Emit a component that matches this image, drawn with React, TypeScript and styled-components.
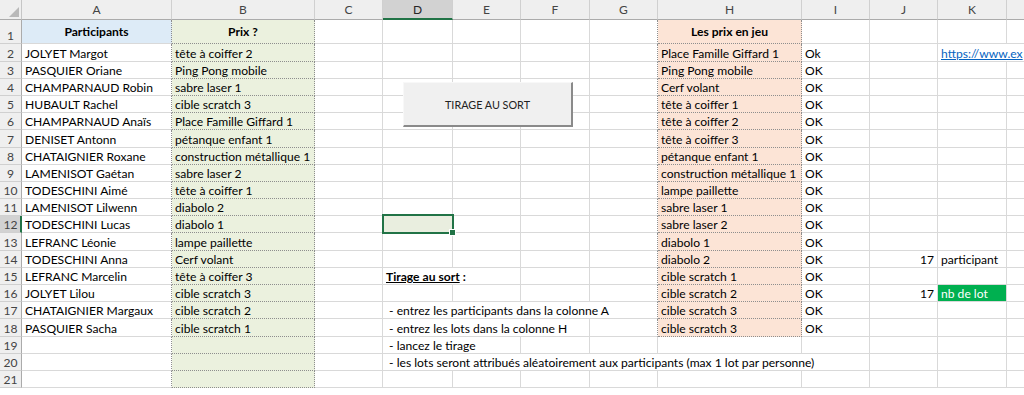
import React from "react";
import styled, { createGlobalStyle } from "styled-components";

const GRID = "#d9d9d9";
const DOT = "#8e8e8e";
const GREEN = "#217346";
const COLS = [22, 150, 143, 68, 70, 68, 69, 68, 144, 68, 68, 69, 90];
const LETTERS = ["A", "B", "C", "D", "E", "F", "G", "H", "I", "J", "K", ""];
const TOTAL = COLS.reduce((a, b) => a + b, 0);
const FONT = `Lato, "Open Sans", "Liberation Sans", sans-serif`;

const GlobalStyle = createGlobalStyle`
  html, body { margin: 0; padding: 0; background: #fff; overflow: hidden; }
  body { font-family: ${FONT}; }
`;

const Sheet = styled.div`
  position: relative;
  display: grid;
  grid-template-columns: ${COLS.map((c) => `${c}px`).join(" ")};
  grid-template-rows: 20px 24.4px repeat(21, 17.2px);
  width: ${TOTAL}px;
  font-family: ${FONT};
  font-size: 12.1px;
  color: #000;
`;

const Corner = styled.div`
  box-sizing: border-box;
  background: #efefef;
  border-right: 1px solid #c6c6c6;
  border-bottom: 1px solid #ababab;
  display: flex;
  align-items: flex-end;
  justify-content: flex-end;
  padding: 0 2px 2px 0;
`;

const ColHeader = styled.div<{ $sel?: boolean }>`
  box-sizing: border-box;
  background: ${(p) => (p.$sel ? "#d2d2d2" : "#efefef")};
  border-right: 1px solid #d0d0d0;
  border-bottom: ${(p) => (p.$sel ? `2px solid ${GREEN}` : "1px solid #ababab")};
  color: ${(p) => (p.$sel ? "#262626" : "#444")};
  display: flex;
  align-items: center;
  justify-content: center;
  font-size: 12px;
  padding-top: ${(p) => (p.$sel ? "1px" : "0")};
`;

const RowHeader = styled.div<{ $sel?: boolean }>`
  box-sizing: border-box;
  background: ${(p) => (p.$sel ? "#d2d2d2" : "#efefef")};
  border-right: ${(p) => (p.$sel ? `2px solid ${GREEN}` : "1px solid #ababab")};
  border-bottom: 1px solid #d0d0d0;
  color: #444;
  display: flex;
  align-items: flex-end;
  justify-content: center;
  line-height: 15px;
  padding-left: ${(p) => (p.$sel ? "1px" : "0")};
`;

type Align = "left" | "center" | "right";

const Cell = styled.div<{
  $span: number;
  $fill?: string;
  $dotR?: boolean;
  $dotB?: boolean;
  $align?: Align;
  $bold?: boolean;
  $color?: string;
  $mid?: boolean;
  $sel?: boolean;
}>`
  box-sizing: border-box;
  position: relative;
  z-index: ${(p) => (p.$sel ? 2 : "auto")};
  grid-column: span ${(p) => p.$span};
  background: ${(p) => p.$fill || "#fff"};
  border-right: 1px ${(p) => (p.$dotR ? `dotted ${DOT}` : `solid ${GRID}`)};
  border-bottom: 1px ${(p) => (p.$dotB ? `dotted ${DOT}` : `solid ${GRID}`)};
  display: flex;
  align-items: ${(p) => (p.$mid ? "center" : "flex-end")};
  justify-content: ${(p) =>
    p.$align === "center" ? "center" : p.$align === "right" ? "flex-end" : "flex-start"};
  padding: 0 3px ${(p) => (p.$mid ? "1px" : "0")} 3px;
  line-height: 15px;
  white-space: nowrap;
  overflow: ${(p) => (p.$sel ? "visible" : "hidden")};
  font-weight: ${(p) => (p.$bold ? 700 : 400)};
  color: ${(p) => p.$color || "#000"};
`;

const Selection = styled.div`
  position: absolute;
  left: -1px;
  top: -2px;
  right: -2px;
  bottom: -2px;
  border: 2px solid ${GREEN};
  pointer-events: none;
`;

const Handle = styled.div`
  position: absolute;
  right: -4px;
  bottom: -4px;
  width: 5px;
  height: 5px;
  background: ${GREEN};
  border: 1px solid #fff;
`;

const Link = styled.span`
  color: #0563c1;
  text-decoration: underline;
`;

const Title = styled.span`
  font-weight: 700;
`;

const Underlined = styled.span`
  text-decoration: underline;
`;

const DrawButton = styled.button`
  position: absolute;
  left: 403px;
  top: 82px;
  width: 170px;
  height: 45px;
  box-sizing: border-box;
  margin: 0;
  background: #f0f0f0;
  border-style: solid;
  border-width: 1px 2px 2px 1px;
  border-color: #f8f8f8 #8a8a8a #8a8a8a #f8f8f8;
  font-family: ${FONT};
  font-size: 10.8px;
  color: #222;
  padding: 0;
  z-index: 3;
`;

const names = [
  "JOLYET Margot",
  "PASQUIER Oriane",
  "CHAMPARNAUD Robin",
  "HUBAULT Rachel",
  "CHAMPARNAUD Anaïs",
  "DENISET Antonn",
  "CHATAIGNIER Roxane",
  "LAMENISOT Gaétan",
  "TODESCHINI Aimé",
  "LAMENISOT Lilwenn",
  "TODESCHINI Lucas",
  "LEFRANC Léonie",
  "TODESCHINI Anna",
  "LEFRANC Marcelin",
  "JOLYET Lilou",
  "CHATAIGNIER Margaux",
  "PASQUIER Sacha",
];

const prizes = [
  "tête à coiffer 2",
  "Ping Pong mobile",
  "sabre laser 1",
  "cible scratch 3",
  "Place Famille Giffard 1",
  "pétanque enfant 1",
  "construction métallique 1",
  "sabre laser 2",
  "tête à coiffer 1",
  "diabolo 2",
  "diabolo 1",
  "lampe paillette",
  "Cerf volant",
  "tête à coiffer 3",
  "cible scratch 3",
  "cible scratch 2",
  "cible scratch 1",
];

const lots = [
  "Place Famille Giffard 1",
  "Ping Pong mobile",
  "Cerf volant",
  "tête à coiffer 1",
  "tête à coiffer 2",
  "tête à coiffer 3",
  "pétanque enfant 1",
  "construction métallique 1",
  "lampe paillette",
  "sabre laser 1",
  "sabre laser 2",
  "diabolo 1",
  "diabolo 2",
  "cible scratch 1",
  "cible scratch 2",
  "cible scratch 3",
  "cible scratch 3",
];

type Spec = {
  span?: number;
  content?: React.ReactNode;
  align?: Align;
  bold?: boolean;
  color?: string;
  fill?: string;
  mid?: boolean;
  selected?: boolean;
};

// column indices: 1=A ... 12=L
function specsFor(row: number): Record<number, Spec> {
  const s: Record<number, Spec> = {};
  if (row === 1) {
    s[1] = { content: "Participants", bold: true, align: "center", mid: true };
    s[2] = { content: "Prix ?", bold: true, align: "center", mid: true };
    s[8] = { content: "Les prix en jeu", bold: true, align: "center", mid: true };
  }
  if (row >= 2 && row <= 18) {
    s[1] = { content: names[row - 2] };
    s[2] = { content: prizes[row - 2] };
    s[8] = { content: lots[row - 2] };
    s[9] = { content: row === 2 ? "Ok" : "OK" };
  }
  if (row === 2) s[11] = { span: 2, content: <Link>https://www.ex</Link> };
  if (row === 12) s[4] = { selected: true, fill: "#e9eedf" };
  if (row === 14) {
    s[10] = { content: "17", align: "right" };
    s[11] = { content: "participant" };
  }
  if (row === 15)
    s[4] = {
      span: 2,
      content: (
        <Title>
          <Underlined>Tirage au sort</Underlined> :
        </Title>
      ),
    };
  if (row === 16) {
    s[10] = { content: "17", align: "right" };
    s[11] = { content: "nb de lot", fill: "#00b050", color: "#fff" };
  }
  if (row === 17) s[4] = { span: 4, content: "\u00a0- entrez les participants dans la colonne A" };
  if (row === 18) s[4] = { span: 3, content: "\u00a0- entrez les lots dans la colonne H" };
  if (row === 19) s[4] = { span: 2, content: "\u00a0- lancez le tirage" };
  if (row === 20)
    s[4] = {
      span: 6,
      content: "\u00a0- les lots seront attribués aléatoirement aux participants (max 1 lot par personne)",
    };
  return s;
}

function fillFor(col: number, row: number): string | undefined {
  if (col === 1 && row === 1) return "#ddebf7";
  if (col === 2) return "#ebf1de";
  if (col === 8 && row <= 18) return "#fce4d6";
  return undefined;
}

function dotRight(col: number, row: number) {
  if (col === 1 || col === 2) return true;
  if ((col === 7 || col === 8) && row <= 18) return true;
  return false;
}

function dotBottom(col: number, row: number) {
  if (col === 2) return true;
  if (col === 8 && row <= 18) return true;
  return false;
}

const Triangle = () => (
  <svg width="10" height="10" viewBox="0 0 10 10">
    <polygon points="10,0 10,10 0,10" fill="#b9b9b9" />
  </svg>
);

function Row({ row }: { row: number }) {
  const specs = specsFor(row);
  const cells: React.ReactNode[] = [];
  let col = 1;
  while (col <= 12) {
    const sp = specs[col] || {};
    const span = sp.span || 1;
    const last = col + span - 1;
    cells.push(
      <Cell
        key={col}
        $span={span}
        $fill={sp.fill || fillFor(col, row)}
        $dotR={dotRight(last, row)}
        $dotB={dotBottom(col, row) && span === 1}
        $align={sp.align}
        $bold={sp.bold}
        $color={sp.color}
        $mid={sp.mid}
        $sel={sp.selected}
      >
        {sp.content}
        {sp.selected && (
          <Selection>
            <Handle />
          </Selection>
        )}
      </Cell>
    );
    col += span;
  }
  return (
    <>
      <RowHeader $sel={row === 12}>{row}</RowHeader>
      {cells}
    </>
  );
}

export default function App() {
  const rows = Array.from({ length: 21 }, (_, i) => i + 1);
  return (
    <>
      <GlobalStyle />
      <Sheet>
        <Corner>
          <Triangle />
        </Corner>
        {LETTERS.map((l, i) => (
          <ColHeader key={i} $sel={l === "D"}>
            {l}
          </ColHeader>
        ))}
        {rows.map((r) => (
          <Row key={r} row={r} />
        ))}
        <DrawButton>TIRAGE AU SORT</DrawButton>
      </Sheet>
    </>
  );
}
